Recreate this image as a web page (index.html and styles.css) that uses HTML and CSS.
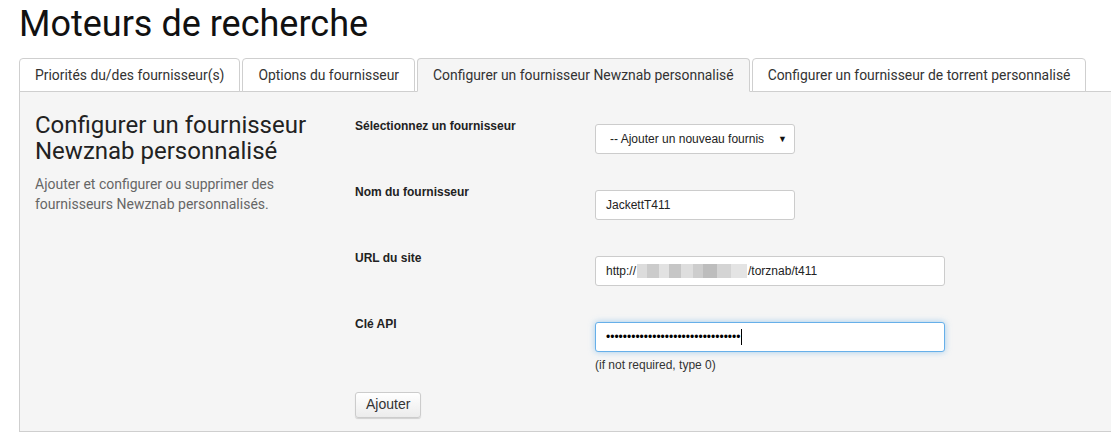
FILE: index.html
```html
<!DOCTYPE html>
<html lang="fr">
<head>
<meta charset="utf-8">
<title>Moteurs de recherche</title>
<link rel="stylesheet" href="styles.css">
</head>
<body>
<h1 class="page-title">Moteurs de recherche</h1>
<div class="tabs">
  <ul class="nav">
    <li class="tab">Priorités du/des fournisseur(s)</li>
    <li class="tab">Options du fournisseur</li>
    <li class="tab active">Configurer un fournisseur Newznab personnalisé</li>
    <li class="tab">Configurer un fournisseur de torrent personnalisé</li>
  </ul>
  <div class="panel">
    <div class="intro">
      <h3 class="intro-title">Configurer un fournisseur Newznab personnalisé</h3>
      <p class="intro-desc">Ajouter et configurer ou supprimer des fournisseurs Newznab personnalisés.</p>
    </div>
    <div class="fields">
      <div class="field">
        <label class="field-label">Sélectionnez un fournisseur</label>
        <div class="field-control">
          <div class="input select"><span class="select-text">-- Ajouter un nouveau fournis</span><span class="select-arrow">▼</span></div>
        </div>
      </div>
      <div class="field">
        <label class="field-label">Nom du fournisseur</label>
        <div class="field-control">
          <div class="input">JackettT411</div>
        </div>
      </div>
      <div class="field">
        <label class="field-label">URL du site</label>
        <div class="field-control">
          <div class="input wide">http://<span class="blur"><i class="b1"></i><i class="b2"></i><i class="b3"></i><i class="b4"></i><i class="b5"></i><i class="b6"></i><i class="b7"></i><i class="b8"></i><i class="b9"></i></span>/torznab/t411</div>
        </div>
      </div>
      <div class="field">
        <label class="field-label">Clé API</label>
        <div class="field-control">
          <div class="input wide focused"><span class="dots">••••••••••••••••••••••••••••••••</span><span class="caret"></span></div>
          <div class="help">(if not required, type 0)</div>
        </div>
      </div>
      <button class="btn" type="button">Ajouter</button>
    </div>
  </div>
</div>
</body>
</html>
```

FILE: styles.css
```css
html, body {
  margin: 0;
  padding: 0;
  background: #ffffff;
  overflow: hidden;
}
body {
  padding-left: 19px;
  font-family: "Liberation Sans", Arial, sans-serif;
  color: #333;
}
.page-title {
  margin: 4px 0 14px 0;
  font-family: Roboto, "Liberation Sans", sans-serif;
  font-weight: 400;
  font-size: 36px;
  line-height: 40px;
  color: #111;
}
.nav {
  display: flex;
  list-style: none;
  margin: 0;
  padding: 0;
  border-bottom: 1px solid #cfcfcf;
}
.tab {
  margin: 0 2px -1px 0;
  padding: 6px 15px;
  line-height: 20px;
  font-family: Roboto, "Liberation Sans", sans-serif;
  font-size: 13.9px;
  color: #333;
  background: #fff;
  border: 1px solid #cfcfcf;
  border-radius: 4px 4px 0 0;
}
.tab.active {
  background: #f5f5f5;
  border-bottom-color: #f5f5f5;
}
.panel {
  display: flex;
  background: #f5f5f5;
  border-left: 1px solid #cfcfcf;
  border-bottom: 1px solid #cfcfcf;
  padding: 20px 15px 13px 15px;
}
.intro {
  flex: 0 0 320px;
}
.intro-title {
  margin: 0;
  font-family: Roboto, "Liberation Sans", sans-serif;
  font-weight: 400;
  font-size: 24px;
  line-height: 26px;
  color: #222;
  width: 300px;
}
.intro-desc {
  margin: 10px 0 0 0;
  font-family: Roboto, "Liberation Sans", sans-serif;
  font-size: 14px;
  line-height: 20px;
  color: #666;
  width: 290px;
}
.fields {
  margin-top: 6px;
}
.field {
  display: flex;
  align-items: flex-start;
  margin-bottom: 30px;
}
.field:nth-child(4) {
  margin-bottom: 18px;
}
.field-label {
  flex: 0 0 240px;
  font-weight: bold;
  font-size: 12px;
  line-height: 17px;
  color: #222;
}
.field-control {
  padding-top: 6px;
}
.input {
  box-sizing: border-box;
  width: 200px;
  height: 30px;
  padding: 0 10px;
  background: #fff;
  border: 1px solid #ccc;
  border-radius: 3px;
  font-size: 12px;
  line-height: 28px;
  color: #222;
  white-space: nowrap;
  display: flex;
  align-items: center;
}
.input.wide {
  width: 350px;
}
.input.focused {
  border-color: #66afe9;
  box-shadow: 0 0 6px rgba(102, 175, 233, 0.6);
}
.select {
  padding: 0 7px 0 14px;
  justify-content: space-between;
}
.select-text {
  overflow: hidden;
}
.select-arrow {
  font-size: 9px;
  color: #111;
}
.blur {
  display: inline-flex;
  height: 14px;
  margin: 0 1px;
}
.blur i {
  display: block;
  height: 14px;
}
.blur .b1 { width: 10px; background: #dcdcdc; }
.blur .b2 { width: 12px; background: #cbcbcb; }
.blur .b3 { width: 10px; background: #e2e2e2; }
.blur .b4 { width: 12px; background: #c6c6c6; }
.blur .b5 { width: 12px; background: #dedede; }
.blur .b6 { width: 10px; background: #cdcdcd; }
.blur .b7 { width: 14px; background: #bdbdbd; }
.blur .b8 { width: 14px; background: #d4d4d4; }
.blur .b9 { width: 16px; background: #e4e4e4; }
.dots {
  font-size: 12px;
  color: #000;
}
.caret {
  display: inline-block;
  width: 1px;
  height: 16px;
  background: #000;
  margin-left: 1px;
}
.help {
  margin-top: 5px;
  font-size: 12px;
  line-height: 17px;
  color: #333;
}
.btn {
  display: block;
  padding: 3px 10px 4px;
  font-family: "Liberation Sans", Arial, sans-serif;
  font-size: 14px;
  line-height: 17px;
  color: #333;
  background: linear-gradient(#ffffff, #ececec);
  border: 1px solid #ccc;
  border-radius: 3px;
  box-shadow: 0 1px 1px rgba(0, 0, 0, 0.15);
}
```
